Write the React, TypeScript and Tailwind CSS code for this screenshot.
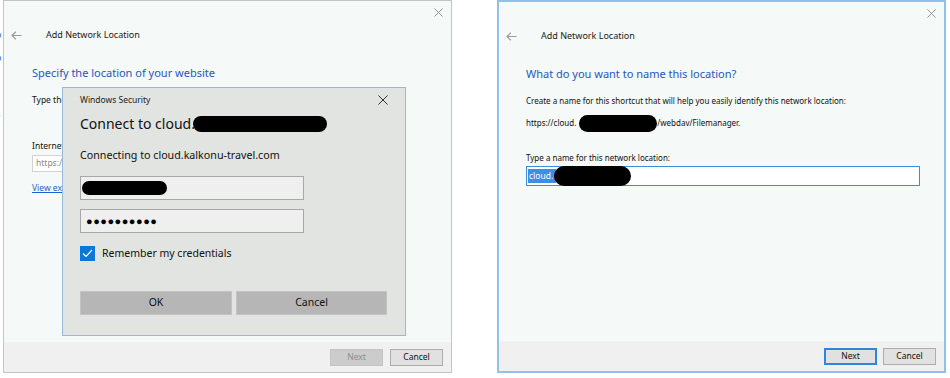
import React from 'react';

const font = "font-['Noto_Sans',sans-serif]";

function CloseX({ size = 10, color = '#8a8a8a' }: { size?: number; color?: string }) {
  return (
    <svg width={size} height={size} viewBox="0 0 10 10" fill="none" stroke={color} strokeWidth="1">
      <path d="M0.5 0.5 L9.5 9.5 M9.5 0.5 L0.5 9.5" />
    </svg>
  );
}

function BackArrow() {
  return (
    <svg width="11" height="9" viewBox="0 0 11 9" fill="none" stroke="#9a9a9a" strokeWidth="1.2">
      <path d="M10.5 4.5 H1 M4.8 0.8 L1 4.5 L4.8 8.2" />
    </svg>
  );
}

function Blob({ w, h, className = '' }: { w: string; h: string; className?: string }) {
  return <span className={`inline-block bg-black rounded-full align-middle ${w} ${h} ${className}`} />;
}

function FooterButton({ label, variant }: { label: string; variant: 'disabled' | 'default' | 'primary' }) {
  const styles = {
    disabled: 'bg-[#cccccc] border border-[#c4c4c4] text-[#8f8f8f]',
    default: 'bg-[#e1e1e1] border border-[#adadad] text-[#111]',
    primary: 'bg-[#e1e1e1] border-2 border-[#2d86da] text-[#111]',
  };
  return (
    <div className={`w-[53px] h-[17px] flex items-center justify-center text-[8.5px] ${styles[variant]}`}>
      {label}
    </div>
  );
}

function WindowHeader() {
  return (
    <>
      <div className="h-[23px] flex items-center justify-end pr-[8px]">
        <CloseX size={9} />
      </div>
      <div className="mt-[2px] h-[18px] flex items-center">
        <div className="w-[42px] pl-[7px] flex items-center">
          <BackArrow />
        </div>
        <span className="text-[9px] text-[#1a1a1a]">Add Network Location</span>
      </div>
    </>
  );
}

function SecurityDialog() {
  return (
    <div className="absolute left-[58px] top-[86px] w-[344px] h-[249px] bg-[#e1e4e0] border border-[#8fbbe4] pl-[17px] pr-[17px] flex flex-col">
      <div className="mt-[4px] h-[16px] flex items-center justify-between">
        <span className="text-[8.5px] text-[#222]">Windows Security</span>
        <CloseX size={10} color="#333" />
      </div>
      <div className="mt-[6px] h-[20px] flex items-center text-[14px] text-[#111] leading-[20px]">
        <span>Connect to cloud.</span>
        <Blob w="w-[134px]" h="h-[16px]" className="-ml-[2px]" />
      </div>
      <div className="mt-[14px] h-[14px] flex items-center text-[10.7px] text-[#111]">
        Connecting to cloud.kalkonu-travel.com
      </div>
      <div className="mt-[14px] w-[224px] h-[24px] bg-[#efefef] border border-[#a8a8a8] flex items-center pl-[1px]">
        <Blob w="w-[85px]" h="h-[14px]" className="rounded-[8px]" />
      </div>
      <div className="mt-[9px] w-[224px] h-[24px] bg-[#efefef] border border-[#a8a8a8] flex items-center pl-[5px] text-[11px] tracking-[0.5px] text-black">
        ●●●●●●●●●●
      </div>
      <div className="mt-[13px] h-[15px] flex items-center gap-[7px]">
        <div className="w-[15px] h-[15px] bg-[#0a78d6] flex items-center justify-center">
          <svg width="11" height="9" viewBox="0 0 11 9" fill="none" stroke="white" strokeWidth="1.2">
            <path d="M1 4.5 L4 7.5 L10 1" />
          </svg>
        </div>
        <span className="text-[10.5px] text-[#111]">Remember my credentials</span>
      </div>
      <div className="mt-[30px] flex gap-[4px]">
        <div className="w-[152px] h-[24px] bg-[#b6b6b6] border border-[#c3c3c3] flex items-center justify-center text-[10.5px] text-[#111]">
          OK
        </div>
        <div className="w-[151px] h-[24px] bg-[#b6b6b6] border border-[#c3c3c3] flex items-center justify-center text-[10.5px] text-[#111]">
          Cancel
        </div>
      </div>
    </div>
  );
}

export default function App() {
  return (
    <div className={`w-[950px] h-[378px] bg-white flex overflow-hidden ${font}`}>
      {/* fragments of the window behind */}
      <div className="w-[3px] h-[373px] overflow-hidden flex flex-col text-[9px] leading-[10px]">
        <span className="mt-[30px] -ml-[4px] text-[#2a5bc6]">o</span>
        <span className="mt-[13px] -ml-[4px] text-[#2a5bc6]">o</span>
        <span className="mt-[3px] -ml-[4px] text-[#777]">l</span>
        <span className="mt-[1px] -ml-[4px] text-[#999]">l</span>
        <span className="mt-[22px] -ml-[4px] text-[#2a5bc6]">s</span>
      </div>

      {/* left window */}
      <div className="relative w-[449px] h-[373px] bg-[#f5f9f7] border border-[#c4c4c4] flex flex-col overflow-hidden">
        <WindowHeader />
        <div className="pl-[28px] flex flex-col">
          <div className="mt-[21px] h-[16px] flex items-center text-[11px] text-[#2557c6]">
            Specify the location of your website
          </div>
          <div className="mt-[13px] h-[12px] flex items-center text-[8.5px] text-[#111] whitespace-nowrap">
            Type the address of the website, FTP site, or network location that this shortcut will open.
          </div>
          <div className="mt-[34px] h-[12px] flex items-center text-[8.5px] text-[#111]">
            Internet or network address:
          </div>
          <div className="mt-[3px] w-[360px] h-[17px] bg-white border border-[#d2d2d2] flex items-center pl-[3px] text-[8.5px] text-[#8a8a8a]">
            https://cloud.kalkonu-travel.com
          </div>
          <div className="mt-[10px] h-[12px] flex items-center text-[8.5px] text-[#1f5fd6] underline">
            View examples
          </div>
        </div>
        <div className="flex-1" />
        <div className="h-[31px] bg-[#f0f0f0] border-t border-[#fafafa] flex items-center justify-end gap-[7px] pr-[8px]">
          <FooterButton label="Next" variant="disabled" />
          <FooterButton label="Cancel" variant="default" />
        </div>
        <SecurityDialog />
      </div>

      <div className="w-[45px]" />

      {/* right window */}
      <div className="w-[449px] h-[373px] bg-[#f5f9f7] border-2 border-[#93c0e8] flex flex-col overflow-hidden">
        <WindowHeader />
        <div className="pl-[27px] flex flex-col">
          <div className="mt-[21px] h-[16px] flex items-center text-[11px] text-[#2557c6]">
            What do you want to name this location?
          </div>
          <div className="mt-[13px] h-[12px] flex items-center text-[8px] text-[#111] whitespace-nowrap">
            Create a name for this shortcut that will help you easily identify this network location:
          </div>
          <div className="mt-[10px] h-[12px] flex items-center text-[8px] text-[#111] whitespace-nowrap">
            <span>https://cloud.</span>
            <Blob w="w-[78px]" h="h-[17px]" className="ml-[3px]" />
            <span>/webdav/Filemanager.</span>
          </div>
          <div className="mt-[23px] h-[12px] flex items-center text-[8px] text-[#111]">
            Type a name for this network location:
          </div>
          <div className="mt-[2px] w-[394px] h-[20px] bg-white border border-[#3a8de0] flex items-center pl-[1px] text-[8.5px]">
            <span className="bg-[#3c8ee6] text-white pl-[1px] pr-[3px] leading-[14px]">cloud.</span>
            <Blob w="w-[77px]" h="h-[20px]" className="-ml-[2px]" />
          </div>
        </div>
        <div className="flex-1" />
        <div className="h-[31px] bg-[#f0f0f0] border-t border-[#fafafa] flex items-center justify-end gap-[6px] pr-[8px]">
          <FooterButton label="Next" variant="primary" />
          <FooterButton label="Cancel" variant="default" />
        </div>
      </div>
    </div>
  );
}
